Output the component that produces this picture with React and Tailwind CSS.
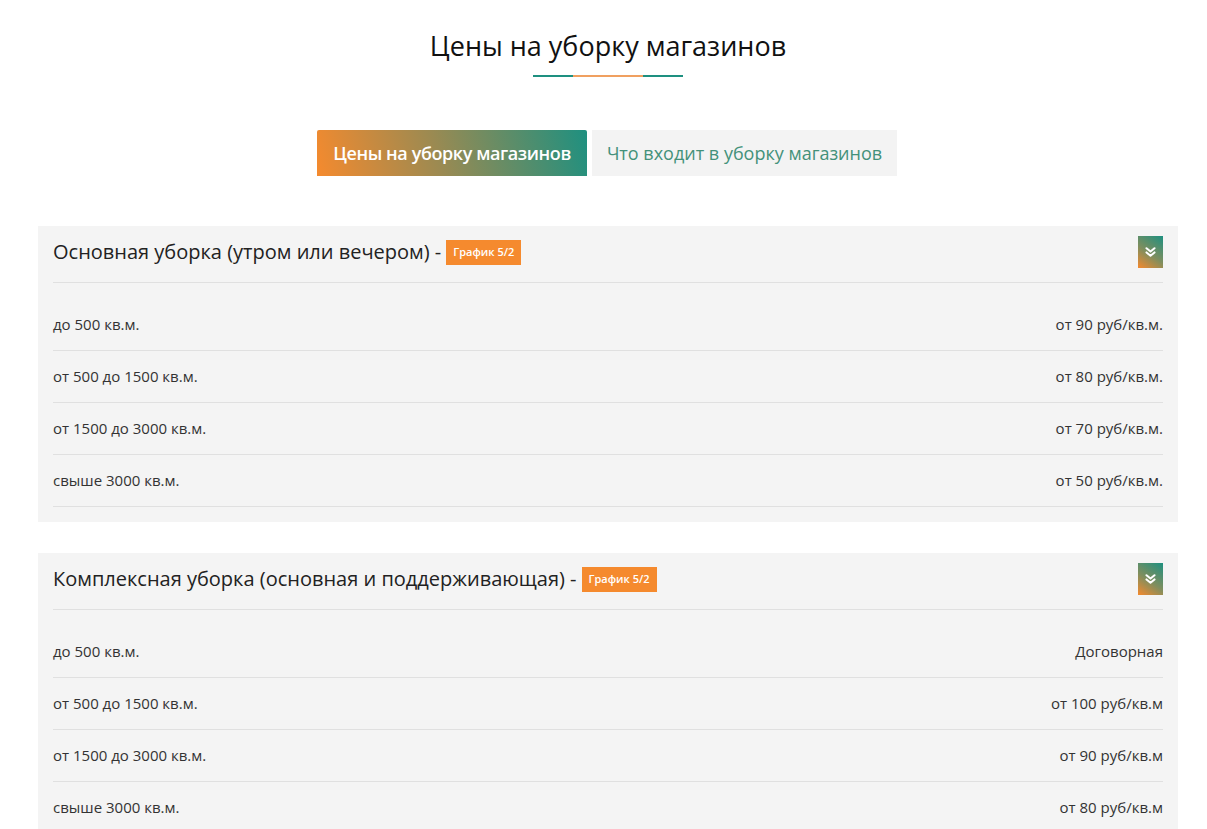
const sections = [
    {
        title: 'Основная уборка (утром или вечером) -',
        badge: 'График 5/2',
        rows: [
            ['до 500 кв.м.', 'от 90 руб/кв.м.'],
            ['от 500 до 1500 кв.м.', 'от 80 руб/кв.м.'],
            ['от 1500 до 3000 кв.м.', 'от 70 руб/кв.м.'],
            ['свыше 3000 кв.м.', 'от 50 руб/кв.м.'],
        ],
    },
    {
        title: 'Комплексная уборка (основная и поддерживающая) -',
        badge: 'График 5/2',
        rows: [
            ['до 500 кв.м.', 'Договорная'],
            ['от 500 до 1500 кв.м.', 'от 100 руб/кв.м'],
            ['от 1500 до 3000 кв.м.', 'от 90 руб/кв.м'],
            ['свыше 3000 кв.м.', 'от 80 руб/кв.м'],
        ],
    },
];

function DoubleChevron() {
    return (
        <svg width="11" height="10" viewBox="0 0 11 10" fill="none" stroke="white" strokeWidth="2" strokeLinecap="round" strokeLinejoin="round">
            <path d="M1.5 1.2 L5.5 4.6 L9.5 1.2" />
            <path d="M1.5 5.4 L5.5 8.8 L9.5 5.4" />
        </svg>
    );
}

function PriceCard({ title, badge, rows }) {
    return (
        <div className="bg-[#f4f4f4] px-[15px] pt-[10px] pb-[15px]">
            <div className="flex items-start justify-between border-b border-[#e0e0e0] pb-[14px]">
                <div className="flex items-center h-[32px]">
                    <span className="text-[20px] text-[#222] leading-none">{title}</span>
                    <span className="ml-[5px] bg-[#f58a2e] text-white text-[11px] font-semibold h-[25px] px-[7px] flex items-center">{badge}</span>
                </div>
                <button
                    type="button"
                    className="w-[25px] h-[32px] flex items-center justify-center bg-[linear-gradient(35deg,#f58a2e_0%,#7f8e5e_45%,#1e9080_100%)]"
                >
                    <DoubleChevron />
                </button>
            </div>
            <div className="pt-[16px]">
                {rows.map(([area, price]) => (
                    <div key={area} className="flex items-center justify-between h-[52px] border-b border-[#e0e0e0] text-[15px] text-[#333]">
                        <span>{area}</span>
                        <span>{price}</span>
                    </div>
                ))}
            </div>
        </div>
    );
}

export default function App() {
    return (
        <div className="min-h-screen bg-white pl-[9px] font-['Open_Sans',sans-serif]">
            <div className="w-[1140px] mx-auto">
                <h1 className="pt-[29px] text-center text-[27px] leading-[34px] text-[#111]">Цены на уборку магазинов</h1>
                <div className="mt-[12px] flex justify-center">
                    <div className="w-[40px] h-[2px] bg-[#1e9080]" />
                    <div className="w-[70px] h-[2px] bg-[#f0a060]" />
                    <div className="w-[40px] h-[2px] bg-[#1e9080]" />
                </div>
                <div className="mt-[53px] pr-[2px] flex justify-center gap-[5px]">
                    <button
                        type="button"
                        className="h-[46px] w-[270px] rounded-t-[2px] bg-[linear-gradient(75deg,#f58a2e_0%,#9a8a52_45%,#1e9080_100%)] text-white text-[18px] font-semibold tracking-[-0.4px]"
                    >
                        Цены на уборку магазинов
                    </button>
                    <button
                        type="button"
                        className="h-[46px] w-[305px] bg-[#f3f3f3] text-[#43917a] text-[18px]"
                    >
                        Что входит в уборку магазинов
                    </button>
                </div>
                <div className="mt-[50px] flex flex-col gap-[31px]">
                    {sections.map(s => (
                        <PriceCard key={s.title} {...s} />
                    ))}
                </div>
            </div>
        </div>
    );
}
